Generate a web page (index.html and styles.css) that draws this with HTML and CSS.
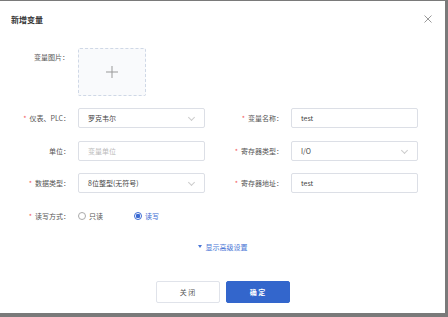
FILE: index.html
```html
<!DOCTYPE html>
<html lang="zh-CN">
<head>
    <meta charset="UTF-8">
    <title>新增变量</title>
    <link rel="stylesheet" href="styles.css">
</head>
<body>
    <div class="dialog">
        <div class="dialog-header">
            <span class="dialog-title">新增变量</span>
            <svg class="close" width="8" height="8" viewBox="0 0 8 8"><path d="M0.5 0.5 L7.5 7.5 M7.5 0.5 L0.5 7.5" stroke="#999" stroke-width="1"/></svg>
        </div>

        <div class="form">
            <div class="upload-row">
                <label class="label">变量图片：</label>
                <div class="upload">
                    <svg width="12" height="12" viewBox="0 0 12 12"><path d="M6 0 V12 M0 6 H12" stroke="#999" stroke-width="1"/></svg>
                </div>
            </div>

            <div class="grid">
                <label class="label"><i>*</i>仪表、PLC：</label>
                <div class="field select">罗克韦尔<span class="arrow"></span></div>
                <label class="label"><i>*</i>变量名称：</label>
                <div class="field">test</div>

                <label class="label">单位：</label>
                <div class="field placeholder">变量单位</div>
                <label class="label"><i>*</i>寄存器类型：</label>
                <div class="field select">I/O<span class="arrow"></span></div>

                <label class="label"><i>*</i>数据类型：</label>
                <div class="field select">8位整型(无符号)<span class="arrow"></span></div>
                <label class="label"><i>*</i>寄存器地址：</label>
                <div class="field">test</div>

                <label class="label"><i>*</i>读写方式：</label>
                <div class="radios">
                    <span class="radio"><span class="dot"></span>只读</span>
                    <span class="radio checked"><span class="dot"></span>读写</span>
                </div>
            </div>

            <div class="advanced"><span class="caret"></span>显示高级设置</div>
        </div>

        <div class="footer">
            <button class="btn">关 闭</button>
            <button class="btn primary">确 定</button>
        </div>
    </div>
</body>
</html>
```

FILE: styles.css
```css
/* Reset */
body, html {
    margin: 0;
    padding: 0;
    height: 100%;
    overflow: hidden;
}

body {
    background: #7a7a7a;
    font-family: "Noto Sans CJK SC", "Noto Sans", sans-serif;
    font-size: 7px;
    color: #555;
}

/* Dialog */
.dialog {
    margin-top: 1px;
    width: 445px;
    height: 312px;
    background: #fff;
    display: flex;
    flex-direction: column;
}

.dialog-header {
    height: 36px;
    display: flex;
    align-items: center;
    justify-content: space-between;
    padding: 0 13px 0 11px;
}

.dialog-title {
    font-size: 8px;
    font-weight: bold;
    color: #333;
}

.close {
    display: block;
}

/* Form */
.form {
    padding-top: 11px;
}

.upload-row {
    display: flex;
    align-items: flex-start;
    column-gap: 9px;
}

.label {
    width: 70px;
    text-align: right;
    color: #555;
    white-space: nowrap;
}

.upload-row .label {
    width: 69px;
    line-height: 19px;
}

.label i {
    font-style: normal;
    color: #f25c5c;
    margin-right: 3px;
}

.upload {
    width: 66px;
    height: 46px;
    border: 1px dashed #cfd8e6;
    border-radius: 2px;
    background: #f9fafc;
    display: flex;
    align-items: center;
    justify-content: center;
}

.grid {
    margin-top: 12px;
    display: grid;
    grid-template-columns: 70px 127px 70px 127px;
    grid-auto-rows: 20px;
    column-gap: 8px;
    row-gap: 12.5px;
    align-items: center;
}

.field {
    height: 18px;
    border: 1px solid #dcdfe6;
    border-radius: 2px;
    padding: 0 9px;
    display: flex;
    align-items: center;
    color: #444;
    position: relative;
}

.placeholder {
    color: #bbb;
}

.arrow {
    position: absolute;
    right: 10px;
    top: 6px;
    width: 4px;
    height: 4px;
    border-right: 1px solid #ccc;
    border-bottom: 1px solid #ccc;
    transform: rotate(45deg);
}

/* Radios */
.radios {
    display: flex;
    align-items: center;
}

.radio {
    display: flex;
    align-items: center;
    width: 56px;
    color: #555;
}

.radio .dot {
    width: 6px;
    height: 6px;
    border: 1px solid #aaa;
    border-radius: 50%;
    margin-right: 3px;
    box-sizing: content-box;
}

.radio.checked {
    color: #3b6ad3;
}

.radio.checked .dot {
    border-color: #3b6ad3;
    background: radial-gradient(circle, #3b6ad3 0 2px, #fff 2.5px);
}

/* Advanced link */
.advanced {
    margin-top: 16px;
    text-align: center;
    color: #4a76d6;
    display: flex;
    justify-content: center;
    align-items: center;
}

.caret {
    width: 0;
    height: 0;
    border-left: 2.5px solid transparent;
    border-right: 2.5px solid transparent;
    border-top: 3px solid #4a76d6;
    margin-right: 4px;
}

/* Footer */
.footer {
    margin-top: auto;
    padding-bottom: 10px;
    display: flex;
    justify-content: center;
    column-gap: 6px;
}

.btn {
    width: 64px;
    height: 22px;
    border: 1px solid #e0e3ea;
    border-radius: 2px;
    background: #fff;
    font-family: inherit;
    font-size: 7px;
    color: #555;
    padding: 0;
}

.btn.primary {
    background: #3366cc;
    border-color: #3366cc;
    color: #fff;
    font-weight: bold;
}
```
